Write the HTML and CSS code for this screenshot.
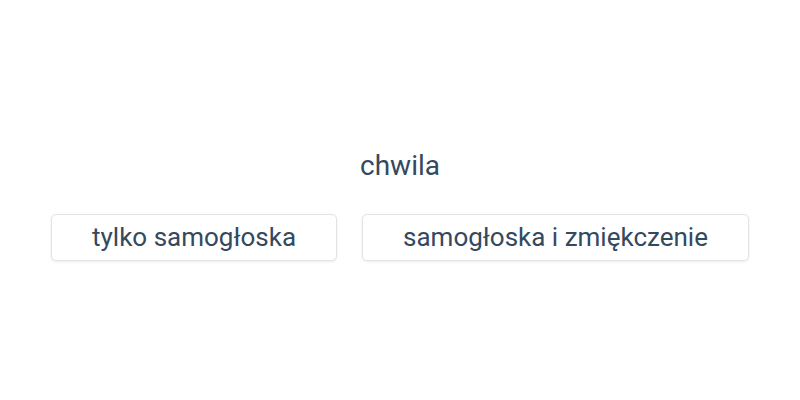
FILE: index.html
```html
<!DOCTYPE html>
<html lang="pl">
<head>
  <meta charset="UTF-8">
  <title>Quiz</title>
  <link rel="stylesheet" href="styles.css">
</head>
<body>
  <div class="quiz">
    <div class="word">chwila</div>
    <div class="answers">
      <button class="answer">tylko samogłoska</button>
      <button class="answer">samogłoska i zmiękczenie</button>
    </div>
  </div>
</body>
</html>
```

FILE: styles.css
```css
body { margin: 0; font-family: Roboto, "Liberation Sans", sans-serif; color: #34495e; background: #fff; }
.quiz { height: 400px; box-sizing: border-box; padding-top: 10px; display: flex; flex-direction: column; align-items: center; justify-content: center; }
.word { font-size: 28px; line-height: 32px; }
.answers { display: flex; gap: 25px; margin-top: 32px; }
.answer { font-family: inherit; font-size: 26px; color: #34495e; background: #fff; border: 1px solid #e3e3e3; border-radius: 5px; padding: 6px 40px; line-height: 33px; box-shadow: 0 1px 3px rgba(0,0,0,0.08); cursor: pointer; }
```
